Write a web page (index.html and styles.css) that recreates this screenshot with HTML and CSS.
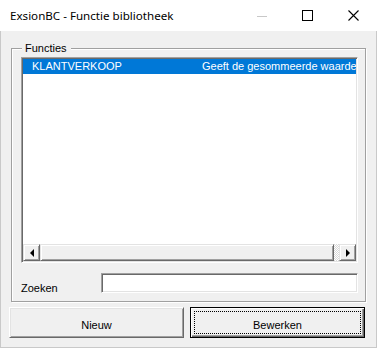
FILE: index.html
```html
<!DOCTYPE html>
<html lang="nl">
  <head>
    <meta charset="UTF-8" />
    <title>ExsionBC - Functie bibliotheek</title>
    <link rel="stylesheet" href="styles.css">
  </head>
  <body>
    <div class="window">
      <!-- titelbalk -->
      <div class="titlebar">
        <span class="title">ExsionBC - Functie bibliotheek</span>
        <div class="controls">
          <svg class="ctl ctl-min" width="10" height="10" viewBox="0 0 10 10">
            <line x1="0" y1="5.5" x2="10" y2="5.5" stroke="#c8c8c8" stroke-width="1" />
          </svg>
          <svg class="ctl ctl-max" width="11" height="11" viewBox="0 0 11 11">
            <rect x="0.5" y="0.5" width="10" height="10" fill="none" stroke="#000" stroke-width="1" />
          </svg>
          <svg class="ctl ctl-close" width="11" height="11" viewBox="0 0 11 11">
            <path d="M0.5 0.5 L10.5 10.5 M10.5 0.5 L0.5 10.5" stroke="#000" stroke-width="1.1" />
          </svg>
        </div>
      </div>

      <div class="client">
        <!-- groep Functies -->
        <div class="group">
          <span class="group-title">Functies</span>

          <div class="list">
            <div class="rows">
              <div class="row selected">
                <span class="col-name">KLANTVERKOOP</span>
                <span class="col-desc">Geeft de gesommeerde waarde van de klantverkoop</span>
              </div>
            </div>
            <div class="hscroll">
              <div class="sb-btn"><span class="arrow-left"></span></div>
              <div class="sb-thumb"></div>
              <div class="sb-track"></div>
              <div class="sb-btn"><span class="arrow-right"></span></div>
            </div>
          </div>

          <div class="search">
            <span class="search-label">Zoeken</span>
            <div class="search-input"></div>
          </div>
        </div>

        <div class="buttons">
          <div class="btn">Nieuw</div>
          <div class="btn btn-default">Bewerken</div>
        </div>
      </div>
    </div>
  </body>
</html>
```

FILE: styles.css
```css
* {
  margin: 0;
  padding: 0;
  box-sizing: border-box;
}

body {
  background: #fff;
  font-family: "Liberation Sans", Arial, sans-serif;
  font-size: 11px;
  color: #000;
}

.window {
  width: 377px;
  height: 348px;
  display: flex;
  flex-direction: column;
}

/* titelbalk */
.titlebar {
  height: 31px;
  background: #fff;
  display: flex;
  align-items: center;
  padding-left: 10px;
}

.title {
  font-family: "Noto Sans", "Open Sans", sans-serif;
  font-size: 11.6px;
  line-height: 16px;
  flex: 1;
  padding-top: 1px;
}

.controls {
  display: flex;
  align-items: center;
  height: 31px;
}

.ctl {
  display: block;
}

.ctl-min {
  margin-right: 35px;
}

.ctl-max {
  margin-right: 35px;
}

.ctl-close {
  margin-right: 18px;
}

/* client gebied */
.client {
  flex: 1;
  background: #f0f0f0;
  border-left: 1px solid #c9c9c9;
  border-right: 1px solid #c9c9c9;
  border-bottom: 1px solid #c9c9c9;
  padding: 17px 0 0 8px;
}

.group {
  margin-left: 2px;
  width: 355px;
  height: 254px;
  border: 1px solid #a0a0a0;
  box-shadow: inset 1px 1px 0 #fff, 1px 1px 0 #fff;
  padding: 0 0 0 9px;
}

.group-title {
  display: block;
  width: fit-content;
  margin: -8px 0 0 1px;
  padding: 0 4px 0 3px;
  height: 14px;
  line-height: 14px;
  background: #f0f0f0;
}

/* lijst */
.list {
  margin-top: 2px;
  width: 337px;
  height: 206px;
  background: #fff;
  border: 1px solid;
  border-color: #a0a0a0 #fff #fff #a0a0a0;
  box-shadow: inset 1px 1px 0 #696969, inset -1px -1px 0 #e3e3e3;
  padding: 1px;
  display: flex;
  flex-direction: column;
}

.rows {
  flex: 1;
  overflow: hidden;
}

.row {
  display: flex;
  height: 15px;
  line-height: 15px;
  white-space: nowrap;
}

.row.selected {
  background: #0078d7;
  color: #fff;
}

.col-name {
  width: 179px;
  flex: none;
  padding-left: 9px;
}

.col-desc {
  overflow: hidden;
}

/* horizontale scrollbalk */
.hscroll {
  height: 17px;
  display: flex;
}

.sb-btn,
.sb-thumb {
  background: #f0f0f0;
  border: 1px solid;
  border-color: #e3e3e3 #696969 #696969 #e3e3e3;
  box-shadow: inset 1px 1px 0 #fff, inset -1px -1px 0 #a0a0a0;
}

.sb-btn {
  width: 17px;
  display: flex;
  align-items: center;
  justify-content: center;
}

.sb-thumb {
  flex: 1;
}

.sb-track {
  width: 5px;
  background: repeating-conic-gradient(#fff 0 25%, #d8d8d8 0 50%) 0 0 / 2px 2px;
}

.arrow-left {
  width: 0;
  height: 0;
  border-top: 4px solid transparent;
  border-bottom: 4px solid transparent;
  border-right: 4px solid #000;
}

.arrow-right {
  width: 0;
  height: 0;
  border-top: 4px solid transparent;
  border-bottom: 4px solid transparent;
  border-left: 4px solid #000;
  margin-left: 1px;
}

/* zoekveld */
.search {
  margin-top: 10px;
  display: flex;
}

.search-label {
  width: 80px;
  padding-top: 9px;
  line-height: 13px;
}

.search-input {
  width: 257px;
  height: 20px;
  background: #fff;
  border: 1px solid;
  border-color: #a0a0a0 #fff #fff #a0a0a0;
  box-shadow: inset 1px 1px 0 #696969, inset -1px -1px 0 #e3e3e3;
}

/* knoppen */
.buttons {
  margin-top: 5px;
  display: flex;
  gap: 6px;
}

.btn {
  width: 175px;
  height: 31px;
  background: #f0f0f0;
  border: 1px solid;
  border-color: #fff #696969 #696969 #fff;
  box-shadow: inset 1px 1px 0 #e3e3e3, inset -1px -1px 0 #a0a0a0;
  display: flex;
  align-items: center;
  justify-content: center;
  padding-top: 4px;
}

.btn-default {
  border: 1px solid #000;
  box-shadow: inset 1px 1px 0 #fff, inset -1px -1px 0 #696969, inset -2px -2px 0 #a0a0a0;
  outline: 1px dotted #000;
  outline-offset: -5px;
}
```
